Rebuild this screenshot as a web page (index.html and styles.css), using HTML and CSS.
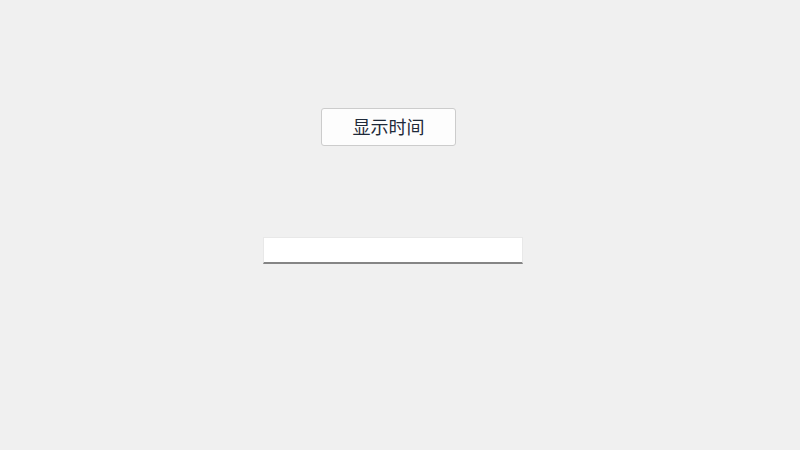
FILE: index.html
```html
<!DOCTYPE html>
<html lang="zh">
<head>
<meta charset="utf-8">
<link rel="stylesheet" href="styles.css">
</head>
<body>
<main class="page">
  <button class="show-btn" type="button">显示时间</button>
  <input class="time-field" type="text">
</main>
</body>
</html>
```
FILE: styles.css
```css
html, body {
  margin: 0;
  padding: 0;
  background: #f0f0f0;
  width: 800px;
  height: 450px;
  overflow: hidden;
}
.page {
  display: flex;
  flex-direction: column;
  align-items: flex-start;
  padding-top: 108px;
}
.show-btn {
  margin-left: 321px;
  width: 135px;
  height: 38px;
  box-sizing: border-box;
  background: #fdfdfd;
  border: 1px solid #cccccc;
  border-radius: 3px;
  font-family: "Noto Sans CJK SC", sans-serif;
  font-weight: 400;
  font-size: 18px;
  color: #1f2a3a;
  padding: 0 0 2px 0;
  line-height: 34px;
}
.time-field {
  margin-top: 91px;
  margin-left: 263px;
  width: 260px;
  height: 27px;
  box-sizing: border-box;
  background: #ffffff;
  border: 1px solid #e8e8e8;
  border-bottom: 2px solid #858585;
  border-radius: 0;
  outline: none;
  padding: 0 6px;
  font-family: "Noto Sans CJK SC", sans-serif;
  font-size: 14px;
}
```
